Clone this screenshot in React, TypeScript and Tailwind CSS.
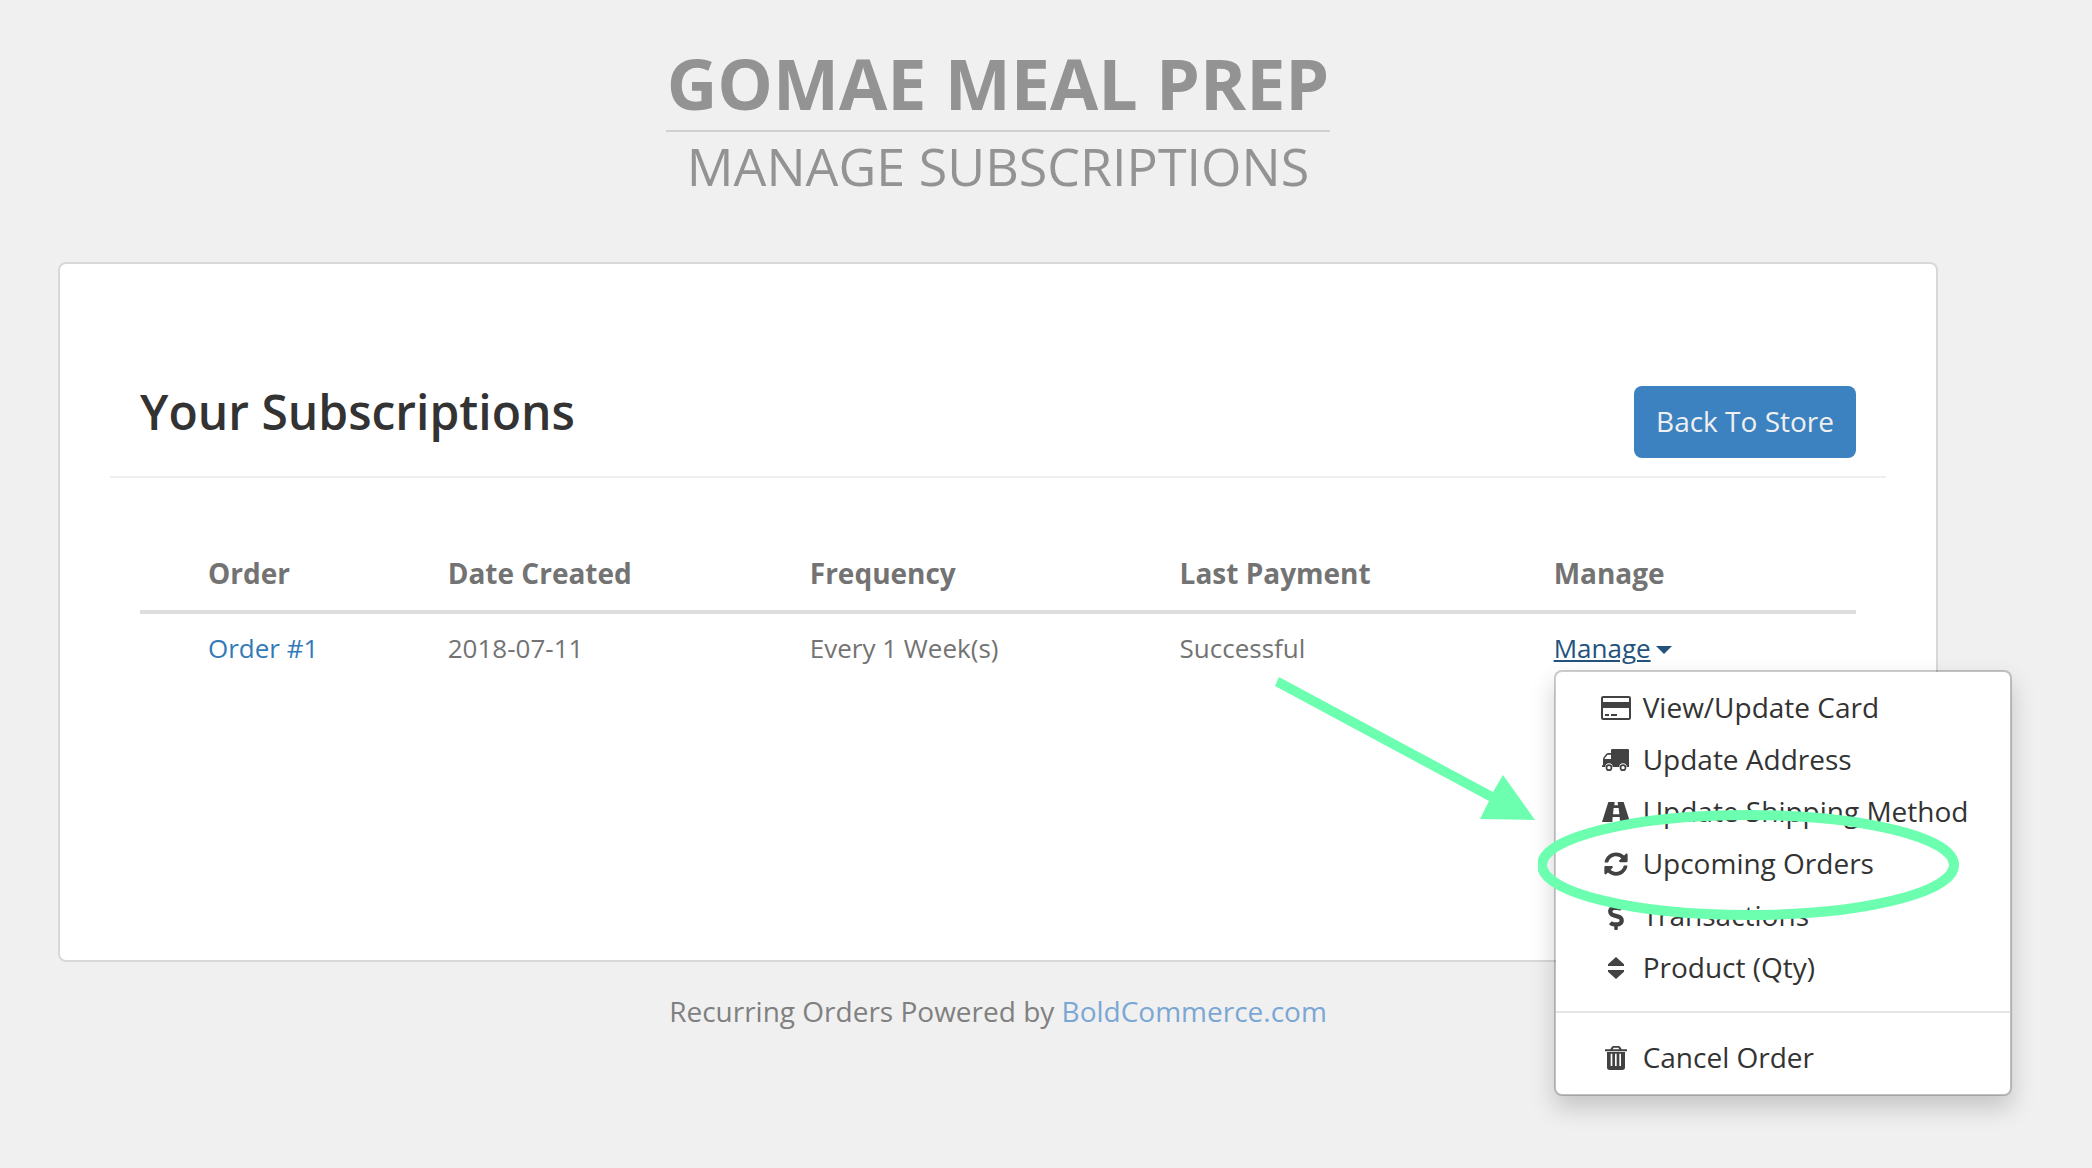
import React, { useState } from 'react';
import { FaDollarSign, FaSyncAlt } from 'react-icons/fa';

function CardIcon() {
  return (
    <svg viewBox="0 0 90 72" className="w-[30px] h-6" fill="currentColor">
      <path fillRule="evenodd" d="M7 0H83Q90 0 90 7V65Q90 72 83 72H7Q0 72 0 65V7Q0 0 7 0ZM6 6V18H84V6ZM6 36V66H84V36Z" />
      <path d="M12 54H24V60H12ZM30 54H48V60H30Z" />
    </svg>
  );
}

function TruckIcon() {
  return (
    <svg viewBox="0 0 81 66" className="w-[27px] h-[22px]" fill="currentColor">
      <path fillRule="evenodd" d="M30 0H78Q81 0 81 3V54H74A11 11 0 0 0 52 54H32A11 11 0 0 0 10 54H0V49H3V32Q3 28 5 25L12 16Q15 12 19 12H27V3Q27 0 30 0ZM17 17L8 28V30H27V17Z" />
      <path fillRule="evenodd" d="M21 46A10 10 0 1 0 21 66A10 10 0 1 0 21 46ZM21 51A5 5 0 1 1 21 61A5 5 0 1 1 21 51ZM63 46A10 10 0 1 0 63 66A10 10 0 1 0 63 46ZM63 51A5 5 0 1 1 63 61A5 5 0 1 1 63 51Z" />
    </svg>
  );
}

function RoadIcon() {
  return (
    <svg viewBox="0 0 84 60" className="w-7 h-5" fill="currentColor">
      <path fillRule="evenodd" d="M19 0H65L84 60H0ZM38 0L37 10H48L47 0ZM35 18L33 37H52L50 18ZM32 45L31 60H54L53 45Z" />
    </svg>
  );
}

function SortIcon() {
  return (
    <svg viewBox="0 0 48 66" className="w-4 h-[22px]" fill="currentColor">
      <path d="M24 0L48 22V27H0V22ZM24 66L48 44V39H0V44Z" />
    </svg>
  );
}

function TrashIcon() {
  return (
    <svg viewBox="0 0 66 72" className="w-[22px] h-6" fill="currentColor">
      <path fillRule="evenodd" d="M16 10L20 3Q22 0 25 0H41Q44 0 46 3L50 10H66V16H0V10ZM23 10H43L40 5H26Z" />
      <path fillRule="evenodd" d="M6 18H60V64Q60 72 52 72H14Q6 72 6 64ZM17 23V60H22V23ZM30 23V60H35V23ZM43 23V60H48V23Z" />
    </svg>
  );
}

const menuItems = [
  { label: 'View/Update Card', icon: <CardIcon /> },
  { label: 'Update Address', icon: <TruckIcon /> },
  { label: 'Update Shipping Method', icon: <RoadIcon /> },
  { label: 'Upcoming Orders', icon: <FaSyncAlt className="w-6 h-6" /> },
  { label: 'Transactions', icon: <FaDollarSign className="w-7 h-7" /> },
  { label: 'Product (Qty)', icon: <SortIcon /> },
];

function MenuItem({ label, icon }: { label: string; icon: React.ReactNode }) {
  return (
    <li>
      <a href="#" className="flex items-center gap-3 pl-[45px] pr-10 text-[28px] leading-[52px] text-[#333] whitespace-nowrap">
        <span className="w-[30px] pt-[2px] flex justify-center text-[#424242]">{icon}</span>
        {label}
      </a>
    </li>
  );
}

function ManageMenu() {
  return (
    <div className="absolute left-0 top-full mt-[3px] w-[458px] z-10">
      <ul className="rounded-lg border-2 border-black/20 bg-white bg-clip-padding pt-[9px] pb-[11px] shadow-[0_12px_24px_rgba(0,0,0,0.18)]">
        {menuItems.map(item => (
          <MenuItem key={item.label} {...item} />
        ))}
        <li className="h-[2px] bg-[#e5e5e5] my-[18px]" />
        <MenuItem label="Cancel Order" icon={<TrashIcon />} />
      </ul>

      {/* Highlight ring and arrow */}
      <svg viewBox="0 0 422 112" className="absolute -left-4 top-[139px] w-[422px] h-[112px] pointer-events-none" fill="none">
        <ellipse cx="210" cy="56" rx="206" ry="50" stroke="#6cffb0" strokeWidth="10" />
      </svg>
      <svg viewBox="0 0 262 144" className="absolute -left-[280px] top-[7px] w-[262px] h-36 pointer-events-none" fill="#6cffb0">
        <path d="M5 0L219 115L229 98L261 143L206 142L215 124L1 9Z" />
      </svg>
    </div>
  );
}

export default function App() {
  const [open, setOpen] = useState(true);

  return (
    <div className="min-h-screen bg-[#f0f0f0] pl-[58px] pr-[154px] overflow-hidden font-['Open_Sans','Noto_Sans',sans-serif] text-[#737373]">
      <header className="flex flex-col items-center pt-9 text-[#939393]">
        <h1 className="border-b-2 border-[#d0d0d0] px-px text-[70px] leading-[94px] font-bold">GOMAE MEAL PREP</h1>
        <h2 className="text-[52px] leading-[68px]">MANAGE SUBSCRIPTIONS</h2>
      </header>

      <main className="mt-[62px] min-h-[700px] rounded-lg border-2 border-[#d8d8d8] bg-white px-[50px] pt-[122px]">
        <div className="flex justify-between items-start border-b-2 border-[#eee] px-[30px] pb-[18px]">
          <h3 className="text-[48px] leading-[52px] font-semibold text-[#333]">Your Subscriptions</h3>
          <button className="h-[72px] px-[22px] pb-[2px] rounded-lg bg-[#3c82c0] text-[28px] text-[#f0f0f0]">Back To Store</button>
        </div>

        <div className="px-[30px] pt-[60px]">
          <table className="w-full table-fixed text-left">
            <thead>
              <tr className="border-b-4 border-[#ddd] text-[28px] leading-10">
                <th className="w-[17%] pl-[68px] pt-[15px] pb-[17px] font-bold">Order</th>
                <th className="w-[21.1%] px-4 pt-[15px] pb-[17px] font-bold">Date Created</th>
                <th className="w-[21.55%] px-4 pt-[15px] pb-[17px] font-bold">Frequency</th>
                <th className="w-[21.8%] px-4 pt-[15px] pb-[17px] font-bold">Last Payment</th>
                <th className="px-4 pt-[15px] pb-[17px] font-bold">Manage</th>
              </tr>
            </thead>
            <tbody>
              <tr className="text-[26px] leading-[38px]">
                <td className="pl-[68px] pt-[15px] pb-[17px]"><a href="#" className="text-[#337ab7]">Order #1</a></td>
                <td className="px-4 pt-[15px] pb-[17px]">2018-07-11</td>
                <td className="px-4 pt-[15px] pb-[17px]">Every 1 Week(s)</td>
                <td className="px-4 pt-[15px] pb-[17px]">Successful</td>
                <td className="px-4 pt-[15px] pb-[17px]">
                  <div className="relative">
                    <button
                      onClick={() => setOpen(!open)}
                      aria-expanded={open}
                      className="flex items-center gap-[5px] text-[#23527c]"
                    >
                      <span className="underline decoration-2 underline-offset-2">Manage</span>
                      <svg viewBox="0 0 16 8" className="w-4 h-2 mt-1" fill="currentColor">
                        <path d="M0 0H16L8 8Z" />
                      </svg>
                    </button>
                    {open && <ManageMenu />}
                  </div>
                </td>
              </tr>
            </tbody>
          </table>
        </div>
      </main>

      <footer className="pt-[29px] pb-10 text-center text-[28px] leading-10 text-[#808080]">
        Recurring Orders Powered by <a href="#" className="text-[#7aa7d3]">BoldCommerce.com</a>
      </footer>
    </div>
  );
}
